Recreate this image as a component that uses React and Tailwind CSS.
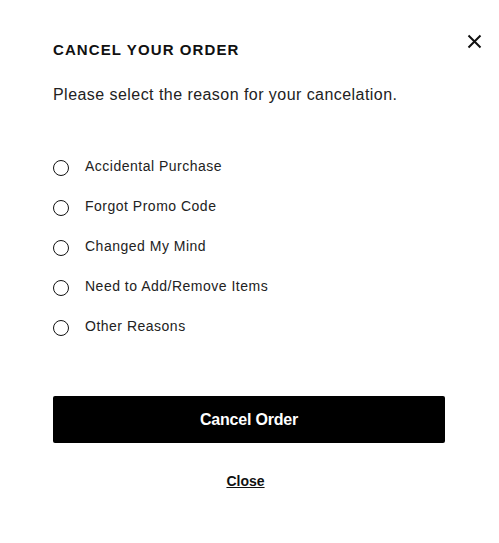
import React from "react";

const reasons = [
  "Accidental Purchase",
  "Forgot Promo Code",
  "Changed My Mind",
  "Need to Add/Remove Items",
  "Other Reasons",
];

export default function App() {
  return (
    <div className="relative w-[499px] h-[543px] bg-white text-[#111] font-['Liberation_Sans',Arial,sans-serif]">
      <button className="absolute left-[466px] top-[33px] w-[16px] h-[16px] flex items-center justify-center">
        <svg width="15" height="15" viewBox="0 0 15 15">
          <path d="M1.5 1.5 L13.5 13.5 M13.5 1.5 L1.5 13.5" stroke="#111" strokeWidth="2" />
        </svg>
      </button>
      <div className="pl-[53px] pr-[54px] pt-[41px] flex flex-col">
        <h1 className="text-[15px] leading-[18px] font-bold tracking-[1.1px] text-[#111]">CANCEL YOUR ORDER</h1>
        <p className="mt-[26px] text-[16px] leading-[20px] text-[#222] tracking-[0.45px]">
          Please select the reason for your cancelation.
        </p>
        <div className="mt-[51px] flex flex-col gap-[20px]">
          {reasons.map((r) => (
            <label key={r} className="flex items-center h-[20px]">
              <span className="w-[16px] h-[16px] rounded-full border border-[#111] mt-[3px]" />
              <span className="ml-[16px] text-[14px] leading-[20px] text-[#222] tracking-[0.5px]">{r}</span>
            </label>
          ))}
        </div>
        <button className="mt-[60px] h-[47px] w-full bg-black rounded-[2px] text-white text-[16px] font-bold tracking-[-0.2px]">
          Cancel Order
        </button>
        <div className="mt-[28px] flex justify-center">
          <a className="text-[14px] font-bold underline text-[#111] mr-[7px]">Close</a>
        </div>
      </div>
    </div>
  );
}
